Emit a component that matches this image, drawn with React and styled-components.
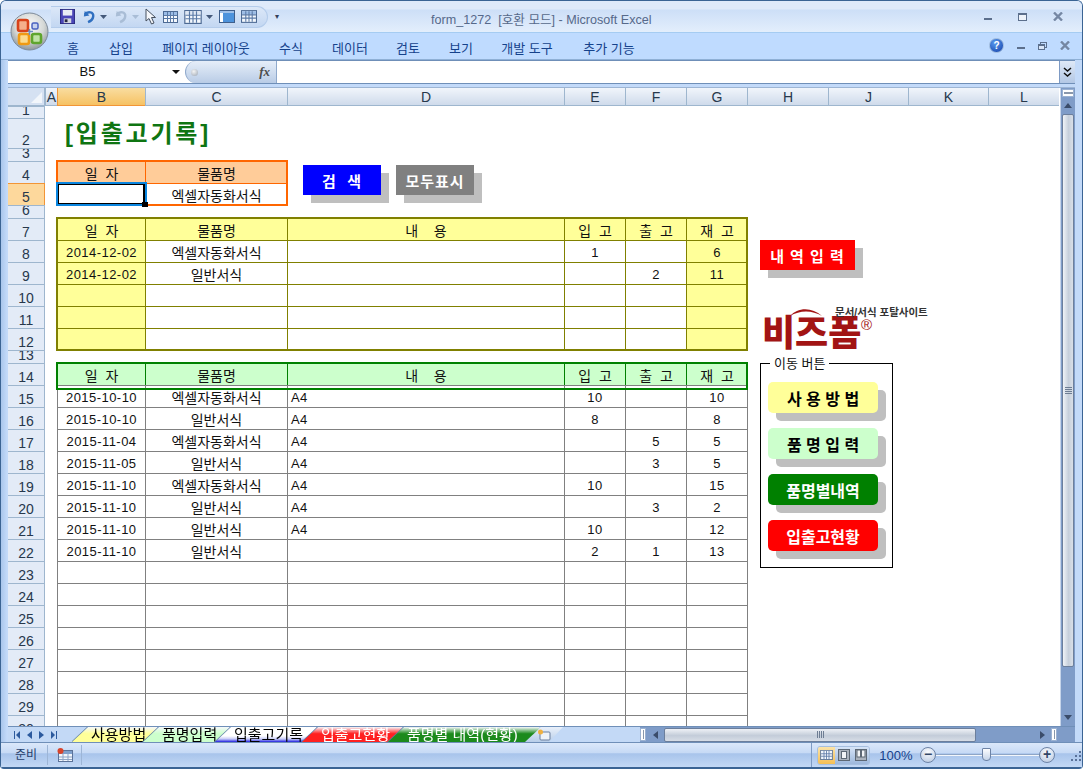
import styled, { createGlobalStyle } from "styled-components";

const GlobalStyle = createGlobalStyle`
  html, body { margin: 0; padding: 0; background: #fff; }
  body { font-family: "Liberation Sans", "Noto Sans CJK KR", sans-serif; }
  * { box-sizing: border-box; }
`;

// 시트 크기 (행 번호 폭 포함)
const COLUMNS = [
  ["A", 12], ["B", 88], ["C", 142], ["D", 277], ["E", 61], ["F", 61],
  ["G", 61], ["H", 81], ["J", 80], ["K", 80], ["L", 71],
];
const ROW_HEIGHTS = { 1: 12, 2: 30, 3: 13, 6: 13, 13: 13 };
const ROWS = Array.from({ length: 30 }, (_, i) => i + 1);

const yellowRows = [
  ["2014-12-02", "엑셀자동화서식", "", "1", "", "6"],
  ["2014-12-02", "일반서식", "", "", "2", "11"],
  ["", "", "", "", "", ""],
  ["", "", "", "", "", ""],
  ["", "", "", "", "", ""],
];

const greenRows = [
  ["2015-10-10", "엑셀자동화서식", "A4", "10", "", "10"],
  ["2015-10-10", "일반서식", "A4", "8", "", "8"],
  ["2015-11-04", "엑셀자동화서식", "A4", "", "5", "5"],
  ["2015-11-05", "일반서식", "A4", "", "3", "5"],
  ["2015-11-10", "엑셀자동화서식", "A4", "10", "", "15"],
  ["2015-11-10", "일반서식", "A4", "", "3", "2"],
  ["2015-11-10", "일반서식", "A4", "10", "", "12"],
  ["2015-11-10", "일반서식", "", "2", "1", "13"],
  ...Array.from({ length: 8 }, () => ["", "", "", "", "", ""]),
];

const tableHead = ["일  자", "물품명", "내    용", "입  고", "출  고", "재  고"];

const sheetTabs = [
  { name: "사용방법", width: 85, color: "#ffff99", text: "#000" },
  { name: "품명입력", width: 86, color: "#ccffcc", text: "#000" },
  { name: "입출고기록", width: 101, color: "#fff", text: "#000", active: true },
  { name: "입출고현황", width: 100, color: "#ff2020", text: "#fff" },
  { name: "품명별 내역(현황)", width: 151, color: "#1c8a1c", text: "#fff" },
];

const moveButtons = [
  { label: "사 용 방 법", bg: "#ffff99", fg: "#000" },
  { label: "품 명 입 력", bg: "#ccffcc", fg: "#000" },
  { label: "품명별내역", bg: "#008000", fg: "#fff" },
  { label: "입출고현황", bg: "#ff0000", fg: "#fff" },
];

const Window = styled.div`
  position: relative;
  width: 1083px;
  height: 769px;
  display: flex;
  flex-direction: column;
  overflow: hidden;
  border-radius: 6px 6px 4px 4px;
  border: 1px solid #3b6494;
  border-bottom: 0;
  background: #bfdbff;
`;

const TitleBar = styled.div`
  height: 32px;
  flex: none;
  display: flex;
  align-items: center;
  position: relative;
  padding: 0 0 0 50px;
  background: linear-gradient(#dfeafa 0, #dfeafa 8px, #cddff7 9px, #e3eefc 31px);
  border-bottom: 1px solid #a5ccf2;
`;

const QuickBar = styled.div`
  width: 217px;
  height: 22px;
  display: flex;
  align-items: center;
  gap: 6px;
  padding-left: 9px;
  border-radius: 0 12px 12px 0;
  background: linear-gradient(#dce8f8, #c3d7f2);
  border: 1px solid #b4cceb;
  border-left: 0;
`;

const QuickCaret = styled.span`
  margin-left: 7px;
  font-size: 8px;
  color: #33405a;
`;

const WindowTitle = styled.div`
  position: absolute;
  left: 430px;
  top: 8px;
  font-size: 12.6px;
  color: #56698a;
  white-space: pre;
`;

const WindowButtons = styled.div`
  position: absolute;
  right: 19px;
  top: 11px;
  display: flex;
  gap: 26px;
  align-items: center;
`;

const Orb = styled.svg`
  position: absolute;
  left: 9px;
  top: 11px;
  width: 39px;
  height: 39px;
  z-index: 3;
`;

const RibbonBar = styled.div`
  height: 27px;
  flex: none;
  position: relative;
  background: #bfdbff;
  border-bottom: 1px solid #8fb0d6;
`;

const RibbonTab = styled.span`
  position: absolute;
  left: ${(p) => p.$x}px;
  top: 5px;
  transform: translateX(-50%);
  font-size: 13px;
  color: #15428b;
  white-space: nowrap;
`;

const RibbonTools = styled.div`
  position: absolute;
  right: 12px;
  top: 5px;
  display: flex;
  align-items: center;
  gap: 13px;
`;

const HelpDot = styled.span`
  width: 15px;
  height: 15px;
  border-radius: 50%;
  background: radial-gradient(circle at 40% 30%, #5a9bf0, #123fa8);
  border: 1px solid #9db9dc;
  color: #fff;
  font: bold 10px "Liberation Sans", sans-serif;
  display: flex;
  align-items: center;
  justify-content: center;
`;

const Body = styled.div`
  flex: 1;
  min-height: 0;
  display: flex;
  flex-direction: column;
  padding: 0 7px;
  background: linear-gradient(90deg, #a9c6ec 0, #c3daf9 6px, #c3daf9 100%);
`;

const FormulaBar = styled.div`
  height: 24px;
  flex: none;
  display: flex;
  margin-bottom: 3px;
  border-top: 1px solid #6f8fb8;
  border-bottom: 1px solid #6f8fb8;
  background: #fff;
`;

const NameBox = styled.div`
  width: 177px;
  flex: none;
  position: relative;
  text-align: center;
  padding: 3px 18px 0 0;
  font-size: 13px;
  color: #111;
`;

const NameCaret = styled.span`
  position: absolute;
  right: 5px;
  top: 9px;
  border-left: 4px solid transparent;
  border-right: 4px solid transparent;
  border-top: 4px solid #111;
`;

const FxBox = styled.div`
  width: 92px;
  flex: none;
  display: flex;
  align-items: center;
  justify-content: space-between;
  padding: 0 6px 0 5px;
  border-radius: 11px 0 0 11px;
  border: 1px solid #8fa9cc;
  border-width: 0 1px 0 1px;
  background: linear-gradient(#e6eef9, #b9cce6);
`;

const FxDot = styled.span`
  width: 7px;
  height: 7px;
  border-radius: 50%;
  background: radial-gradient(circle at 40% 35%, #f4f4f4, #9aa5b3);
`;

const FxText = styled.span`
  font: italic bold 13px "Liberation Serif", serif;
  color: #4c4c4c;
`;

const FormulaInput = styled.div`
  flex: 1;
`;

const ExpandButton = styled.div`
  width: 16px;
  flex: none;
  display: flex;
  align-items: center;
  justify-content: center;
  border-left: 1px solid #7d9ac4;
  background: linear-gradient(#dfe9f7, #b3c8e5);
`;

const SheetArea = styled.div`
  flex: 1;
  min-height: 0;
  display: flex;
  background: #fff;
  border-top: 1px solid #9db5d4;
`;

const Grid = styled.div`
  position: relative;
  width: 1052px;
  flex: none;
  overflow: hidden;
  display: grid;
  grid-template-columns: 37px ${COLUMNS.map((c) => `${c[1]}px`).join(" ")};
  grid-template-rows: 18px ${ROWS.map((r) => `${ROW_HEIGHTS[r] || 22}px`).join(" ")};
  align-content: start;
`;

const Corner = styled.div`
  grid-column: 1;
  grid-row: 1;
  background: #d5e1f2;
  border-right: 1px solid #9eb6ce;
  border-bottom: 1px solid #9eb6ce;
  display: flex;
  align-items: flex-end;
  justify-content: flex-end;
  padding: 0 2px 2px 0;
`;

const CornerMark = styled.span`
  border-left: 11px solid transparent;
  border-bottom: 11px solid #f2f6fb;
`;

const ColumnHead = styled.div`
  grid-row: 1;
  grid-column: ${(p) => p.$col};
  display: flex;
  align-items: center;
  justify-content: center;
  font-size: 14px;
  color: #27384c;
  overflow: hidden;
  background: ${(p) => (p.$active ? "linear-gradient(#f9dda0, #f6c264)" : "linear-gradient(#f1f5fb, #cfdbeb)")};
  border-left: 1px solid ${(p) => (p.$active ? "#f29536" : "#9eb6ce")};
  border-bottom: 1px solid ${(p) => (p.$active ? "#f29536" : "#9eb6ce")};
`;

const RowHead = styled.div`
  grid-column: 1;
  grid-row: ${(p) => p.$row};
  display: flex;
  align-items: flex-end;
  justify-content: center;
  padding-bottom: 2px;
  font-size: 14px;
  line-height: 12px;
  color: #27384c;
  overflow: hidden;
  background: ${(p) => (p.$active ? "#fdd89c" : "#e3ebf7")};
  border-top: 1px solid ${(p) => (p.$active ? "#f29536" : "#9eb6ce")};
  border-right: 1px solid ${(p) => (p.$active ? "#f29536" : "#9eb6ce")};
`;

const SheetTitle = styled.div`
  grid-column: 3 / 6;
  grid-row: 3;
  display: flex;
  align-items: flex-end;
  padding-left: 8px;
  font-size: 24px;
  line-height: 29px;
  letter-spacing: 2.8px;
  font-weight: 700;
  color: #0f7512;
  white-space: nowrap;
`;

const Table = styled.div`
  position: relative;
  grid-column: ${(p) => p.$cols};
  grid-row: ${(p) => p.$rows};
  display: grid;
  grid-template-columns: subgrid;
  grid-template-rows: subgrid;
  &::after {
    content: "";
    position: absolute;
    inset: -1px;
    border: 2px solid ${(p) => p.$frame};
    pointer-events: none;
    z-index: 1;
  }
`;

// 초록 표는 제목 행만 굵은 테두리, 본문은 회색 선
const LogTable = styled(Table)`
  &::after {
    bottom: auto;
    height: 24px;
  }
  & > :nth-child(6n) {
    box-shadow: 1px 0 0 #808080;
  }
`;

const Cell = styled.div`
  display: flex;
  align-items: center;
  justify-content: ${(p) => (p.$left ? "flex-start" : "center")};
  padding: ${(p) => (p.$num ? "1px" : "0")} 0 0 ${(p) => (p.$left ? "3px" : "0")};
  font-size: ${(p) => (p.$num ? "13px" : "14px")};
  color: #111;
  white-space: pre;
  letter-spacing: ${(p) => (p.$num ? "0.45px" : "0")};
  background: ${(p) => p.$fill || "#fff"};
  border-top: 1px solid ${(p) => p.$line};
  border-left: 1px solid ${(p) => p.$line};
`;

const ActiveCell = styled.div`
  position: absolute;
  left: 48px;
  top: 94px;
  width: 91px;
  height: 24px;
  border: 2px solid #0a86e0;
  z-index: 2;
  &::before {
    content: "";
    position: absolute;
    inset: 0;
    border: 1px solid #000;
    border-right-width: 2px;
  }
  &::after {
    content: "";
    position: absolute;
    right: -3px;
    bottom: -3px;
    width: 6px;
    height: 5px;
    background: #000;
  }
`;

const ShapeButton = styled.div`
  position: absolute;
  left: ${(p) => p.$x}px;
  top: ${(p) => p.$y}px;
  width: ${(p) => p.$w}px;
  height: 30px;
  display: flex;
  align-items: center;
  justify-content: center;
  background: ${(p) => p.$bg};
  box-shadow: 8px 8px 0 #bfbfbf;
  color: #fff;
  font-size: 15px;
  letter-spacing: 1px;
  font-weight: 700;
  white-space: pre;
  z-index: 2;
`;

const Logo = styled.div`
  position: absolute;
  left: 755px;
  top: 218px;
  width: 166px;
  height: 44px;
  z-index: 2;
`;

const LogoMark = styled.span`
  position: absolute;
  left: -1px;
  top: 6px;
  font-size: 36px;
  line-height: 44px;
  font-weight: 900;
  color: #a21414;
  white-space: nowrap;
`;

const LogoArc = styled.svg`
  position: absolute;
  left: 25px;
  top: 0;
`;

const LogoTag = styled.span`
  position: absolute;
  left: 72px;
  top: 0;
  font-size: 10.5px;
  line-height: 13px;
  font-weight: 700;
  color: #333;
  white-space: nowrap;
`;

const LogoReg = styled.span`
  position: absolute;
  left: 98px;
  top: 12px;
  font-size: 15px;
  line-height: 14px;
  color: #a21414;
`;

const MoveGroup = styled.div`
  position: absolute;
  left: 752px;
  top: 275px;
  width: 133px;
  height: 205px;
  display: flex;
  flex-direction: column;
  gap: 15px;
  padding: 18px 0 0 7px;
  background: #fff;
  border: 1px solid #000;
  z-index: 2;
`;

const GroupLegend = styled.span`
  position: absolute;
  left: 9px;
  top: -7px;
  padding: 0 4px;
  background: #fff;
  font-size: 13px;
  line-height: 14px;
  color: #111;
  white-space: nowrap;
`;

const MoveButton = styled.div`
  width: 110px;
  height: 31px;
  flex: none;
  display: flex;
  align-items: center;
  justify-content: center;
  border-radius: 5px;
  font-size: 16px;
  font-weight: 700;
  background: ${(p) => p.$bg};
  color: ${(p) => p.$fg};
  box-shadow: 8px 8px 0 #bfbfbf;
`;

const VScroll = styled.div`
  flex: 1;
  position: relative;
  display: flex;
  flex-direction: column;
  align-items: stretch;
  background: #7f9cc8;
  border-left: 1px solid #c7d5ea;
  margin-right: 0;
`;

const SplitBox = styled.div`
  height: 8px;
  flex: none;
  margin: 1px 1px 0;
  background: #fff;
  border: 1px solid #9bb2d2;
  display: flex;
  align-items: center;
  justify-content: center;
  &::before {
    content: "";
    width: 9px;
    height: 2px;
    background: #8a98ac;
  }
`;

const ArrowBox = styled.div`
  height: 17px;
  flex: none;
  display: flex;
  align-items: center;
  justify-content: center;
`;

const ArrowUp = styled.span`
  border-left: 4px solid transparent;
  border-right: 4px solid transparent;
  border-bottom: 5px solid #3a4c6a;
`;

const ArrowDown = styled.span`
  border-left: 4px solid transparent;
  border-right: 4px solid transparent;
  border-top: 5px solid #3a4c6a;
`;

const VThumb = styled.div`
  height: 553px;
  flex: none;
  margin: 0 1px;
  border: 1px solid #6c7f9c;
  border-radius: 2px;
  background: linear-gradient(90deg, #f0f3f7, #c6cfdb 55%, #d9dfe8);
  display: flex;
  align-items: center;
  justify-content: center;
`;

const ThumbGrip = styled.span`
  width: 7px;
  height: 7px;
  background: repeating-linear-gradient(#6e7d93 0 1px, transparent 1px 2px);
`;

const VTrack = styled.div`
  flex: 1;
`;

const BottomRow = styled.div`
  height: 16px;
  flex: none;
  display: flex;
  align-items: stretch;
  background: #c3d9f6;
  border-top: 1px solid #6f8fb8;
`;

const TabNav = styled.div`
  width: 64px;
  flex: none;
  display: flex;
  align-items: center;
  gap: 7px;
  padding-left: 6px;
`;

const TabStrip = styled.div`
  width: 568px;
  flex: none;
  display: flex;
  overflow: hidden;
`;

const TabShell = styled.div`
  width: ${(p) => p.$w}px;
  margin-right: -14px;
  flex: none;
  filter: drop-shadow(-1px 0 0 #5e7ea8);
`;

const TabFace = styled.div`
  height: 100%;
  display: flex;
  align-items: center;
  padding-left: 19px;
  font-size: 15px;
  line-height: 15px;
  white-space: nowrap;
  color: ${(p) => p.$text};
  clip-path: polygon(0 100%, 16px 0, 100% 0, 100% 100%);
  background: ${(p) =>
    p.$active
      ? "linear-gradient(#fff 0, #fff 60%, #c8ccf8 80%, #1e1ee0 100%)"
      : `linear-gradient(#f6f8fc, ${p.$color} 45%, ${p.$color} 100%)`};
`;

const NewTab = styled.div`
  width: 38px;
  flex: none;
  display: flex;
  align-items: center;
  justify-content: center;
  clip-path: polygon(0 100%, 16px 0, 100% 0, 100% 0, calc(100% - 14px) 100%);
  background: linear-gradient(#e9f0fa, #b8cee9);
`;

const HScroll = styled.div`
  flex: 1;
  display: flex;
  align-items: center;
  background: #7f9cc8;
`;

const SplitHandle = styled.div`
  width: 6px;
  height: 13px;
  flex: none;
  background: #fff;
  border: 1px solid #9bb2d2;
  display: flex;
  justify-content: center;
  &::before {
    content: "";
    width: 1px;
    height: 9px;
    margin-top: 1px;
    background: #8a98ac;
  }
`;

const HThumb = styled.div`
  width: 312px;
  height: 14px;
  flex: none;
  margin-left: 6px;
  border: 1px solid #6c7f9c;
  border-radius: 2px;
  background: linear-gradient(#eef1f6, #c3ccd9 55%, #d7dde6);
  display: flex;
  align-items: center;
  justify-content: center;
`;

const HGrip = styled.span`
  width: 7px;
  height: 7px;
  background: repeating-linear-gradient(90deg, #6e7d93 0 1px, transparent 1px 2px);
`;

const ArrowLeft = styled.span`
  margin-left: 7px;
  border-top: 4px solid transparent;
  border-bottom: 4px solid transparent;
  border-right: 5px solid #3a4c6a;
`;

const ArrowRight = styled.span`
  margin-left: 64px;
  margin-right: 6px;
  border-top: 4px solid transparent;
  border-bottom: 4px solid transparent;
  border-left: 5px solid #3a4c6a;
`;

const StatusBar = styled.div`
  height: 27px;
  flex: none;
  margin: 0 -7px;
  display: flex;
  align-items: center;
  position: relative;
  background: linear-gradient(#dbe8fa, #c7daf5 40%, #a8c4eb 45%, #c3d8f5);
  border-top: 1px solid #6f8fb8;
  border-bottom: 2px solid #3b6494;
`;

const StatusText = styled.div`
  width: 47px;
  flex: none;
  padding-left: 14px;
  font-size: 12px;
  color: #27406c;
  border-right: 1px solid #9db5d6;
  line-height: 20px;
`;

const StatusIcon = styled.div`
  width: 34px;
  flex: none;
  height: 20px;
  display: flex;
  align-items: center;
  justify-content: center;
  border-right: 1px solid #9db5d6;
`;

const StatusRight = styled.div`
  margin-left: auto;
  width: 271px;
  height: 100%;
  display: flex;
  align-items: center;
  padding-left: 5px;
  border-left: 1px solid #7e9bc4;
`;

const ViewGroup = styled.div`
  width: 56px;
  height: 19px;
  display: flex;
  border-radius: 3px;
  border: 1px solid #a6bfdf;
  overflow: hidden;
`;

const ViewButton = styled.div`
  flex: 1;
  display: flex;
  align-items: center;
  justify-content: center;
  background: ${(p) => (p.$active ? "linear-gradient(#fbe3a8, #f5bf55)" : "linear-gradient(#d6e4f7, #9db8dc)")};
`;

const ZoomText = styled.span`
  margin-left: 9px;
  width: 43px;
  font-size: 13px;
  color: #15428b;
`;

const ZoomRound = styled.span`
  width: 16px;
  height: 16px;
  flex: none;
  border-radius: 50%;
  border: 1px solid #6d83a6;
  background: radial-gradient(circle at 50% 30%, #fbfcfe, #b5c6df);
  color: #334766;
  font: bold 14px/13px "Liberation Sans", sans-serif;
  text-align: center;
`;

const ZoomTrack = styled.div`
  width: 103px;
  height: 2px;
  flex: none;
  position: relative;
  background: linear-gradient(#8fa6c6 50%, #f3f7fc 50%);
`;

const ZoomThumb = styled.span`
  position: absolute;
  left: 46px;
  top: -6px;
  width: 9px;
  height: 13px;
  border: 1px solid #6d83a6;
  border-radius: 1px 1px 4px 4px;
  background: linear-gradient(#fbfcfe, #c5d4e8);
`;

const Grip = styled.svg`
  margin-left: 16px;
  flex: none;
`;

const FloppyIcon = () => (
  <svg width="15" height="15" viewBox="0 0 16 16">
    <rect x="0.5" y="0.5" width="15" height="15" fill="#4a46b8" stroke="#2a2a80" />
    <rect x="3" y="1" width="10" height="6" fill="#e8ecf5" />
    <rect x="4" y="10" width="8" height="5" fill="#d5d8e0" />
    <rect x="5" y="11" width="3" height="3" fill="#23233f" />
  </svg>
);

const UndoIcon = ({ color }) => (
  <svg width="15" height="15" viewBox="0 0 16 16" fill="none">
    <path d="M4 2 L3 8 L9 7" fill={color} />
    <path d="M4 6 C7 2 14 3 13 8 C12.6 11 10 13 7.500 14" stroke={color} strokeWidth="2.600" />
  </svg>
);

const SmallCaret = ({ color = "#44597a" }) => (
  <svg width="7" height="4" viewBox="0 0 7 4" style={{ marginLeft: -2 }}>
    <path d="M0 0h7L3.500 4z" fill={color} />
  </svg>
);

const CursorIcon = () => (
  <svg width="12" height="17" viewBox="0 0 12 17">
    <path d="M1 1 L1 13 L4 10.500 L6.500 16 L9 15 L6.500 9.500 L10.500 9.500 Z" fill="#f4f6fa" stroke="#46505f" />
  </svg>
);

const GridIcon = ({ w = 15, h = 12, head = "#9bbce6" }) => (
  <svg width={w} height={h} viewBox="0 0 15 12">
    <rect x="0.5" y="0.5" width="14" height="11" fill="#f4f8fd" stroke="#4d6a94" />
    <rect x="1" y="1" width="13" height="3" fill={head} />
    <path d="M1 4.500h13M1 7.500h13M4.500 1v10M7.500 1v10M10.500 1v10" stroke="#5b7aa6" strokeWidth="1" />
  </svg>
);

const PaneIcon = () => (
  <svg width="16" height="13" viewBox="0 0 16 13">
    <rect x="0.5" y="0.5" width="15" height="12" fill="#fff" stroke="#3f5f8c" />
    <rect x="4" y="3" width="11" height="9" fill="#4d93dc" />
    <rect x="1" y="1" width="14" height="2" fill="#9fc0e8" />
  </svg>
);

const MinIcon = ({ w = 8 }) => (
  <svg width={w} height="8" viewBox={`0 0 ${w} 8`}>
    <rect x="0" y="5" width={w} height="2" fill="#5c6f8c" />
  </svg>
);

const MaxIcon = () => (
  <svg width="9" height="8" viewBox="0 0 9 8">
    <rect x="0.5" y="0.5" width="8" height="7" fill="#eef3fa" stroke="#5c6f8c" />
    <rect x="0" y="0" width="9" height="2" fill="#5c6f8c" />
  </svg>
);

const RestoreIcon = () => (
  <svg width="9" height="8" viewBox="0 0 9 8">
    <rect x="2.500" y="0.500" width="6" height="5" fill="none" stroke="#5c6f8c" />
    <rect x="0.500" y="2.500" width="6" height="5" fill="#d9e6f8" stroke="#5c6f8c" />
    <rect x="0" y="2" width="7" height="2" fill="#5c6f8c" />
  </svg>
);

const CloseIcon = () => (
  <svg width="10" height="9" viewBox="0 0 10 9">
    <path d="M1 0.500 L9 8.500 M9 0.500 L1 8.500" stroke="#7587a3" strokeWidth="2.400" />
  </svg>
);

const NavArrows = () => (
  <>
    <svg width="6" height="8" viewBox="0 0 6 8"><path d="M0 0h1v8H0zM6 0v8L2 4z" fill="#2c5a9e" /></svg>
    <svg width="5" height="8" viewBox="0 0 5 8"><path d="M5 0v8L0 4z" fill="#2c5a9e" /></svg>
    <svg width="5" height="8" viewBox="0 0 5 8"><path d="M0 0v8l5-4z" fill="#2c5a9e" /></svg>
    <svg width="6" height="8" viewBox="0 0 6 8"><path d="M5 0h1v8H5zM0 0v8l4-4z" fill="#2c5a9e" /></svg>
  </>
);

const renderRows = (rows, line, leftFill) =>
  rows.flatMap((row, r) =>
    row.map((value, c) => (
      <Cell
        key={`${r}-${c}`}
        $line={line}
        $left={c === 2}
        $num={c !== 1}
        $fill={leftFill && (c === 0 || c === 5) ? leftFill : undefined}
      >
        {value}
      </Cell>
    ))
  );

const App = () => {
  return (
    <Window>
      <GlobalStyle />
      <Orb viewBox="0 0 39 39">
        <defs>
          <radialGradient id="orbFill" cx="50%" cy="35%" r="65%">
            <stop offset="0" stopColor="#fdfdfd" />
            <stop offset="0.6" stopColor="#d5d8d6" />
            <stop offset="1" stopColor="#8f979c" />
          </radialGradient>
        </defs>
        <circle cx="19.500" cy="19.500" r="18.500" fill="url(#orbFill)" stroke="#7d8a99" />
        <rect x="8" y="8" width="10" height="11" rx="2" fill="#f4b08c" stroke="#d8431a" strokeWidth="2.600" />
        <rect x="22" y="11" width="6" height="6" rx="1.500" fill="#c7d2ee" stroke="#4a62c0" strokeWidth="1.500" />
        <rect x="9" y="22" width="10" height="10" rx="2" fill="#fbdc90" stroke="#f09a13" strokeWidth="2.600" />
        <rect x="22" y="22" width="9" height="9" rx="2" fill="#bfe3a6" stroke="#5fa52e" strokeWidth="2.600" />
        <path d="M18 19.500h5M19.500 17v6" stroke="#6d8fc0" strokeWidth="1.500" />
      </Orb>

      <TitleBar>
        <QuickBar>
          <FloppyIcon />
          <UndoIcon color="#2f6fc0" />
          <SmallCaret />
          <UndoIcon color="#a9bdd6" />
          <SmallCaret color="#a9bdd6" />
          <CursorIcon />
          <GridIcon />
          <GridIcon w={18} h={14} head="#dfe8f4" />
          <SmallCaret />
          <PaneIcon />
          <GridIcon w={16} h={13} />
        </QuickBar>
        <QuickCaret>▾</QuickCaret>
        <WindowTitle>form_1272  [호환 모드] - Microsoft Excel</WindowTitle>
        <WindowButtons>
          <MinIcon />
          <MaxIcon />
          <CloseIcon />
        </WindowButtons>
      </TitleBar>

      <RibbonBar>
        <RibbonTab $x={72}>홈</RibbonTab>
        <RibbonTab $x={120}>삽입</RibbonTab>
        <RibbonTab $x={205}>페이지 레이아웃</RibbonTab>
        <RibbonTab $x={290}>수식</RibbonTab>
        <RibbonTab $x={349}>데이터</RibbonTab>
        <RibbonTab $x={407}>검토</RibbonTab>
        <RibbonTab $x={460}>보기</RibbonTab>
        <RibbonTab $x={526}>개발 도구</RibbonTab>
        <RibbonTab $x={608}>추가 기능</RibbonTab>
        <RibbonTools>
          <HelpDot>?</HelpDot>
          <MinIcon />
          <RestoreIcon />
          <CloseIcon />
        </RibbonTools>
      </RibbonBar>

      <Body>
        <FormulaBar>
          <NameBox>
            B5
            <NameCaret />
          </NameBox>
          <FxBox>
            <FxDot />
            <FxText>fx</FxText>
          </FxBox>
          <FormulaInput />
          <ExpandButton>
            <svg width="9" height="11" viewBox="0 0 9 11" fill="none" stroke="#111" strokeWidth="1.500">
              <path d="M1 1l3.500 3L8 1M1 6l3.500 3L8 6" />
            </svg>
          </ExpandButton>
        </FormulaBar>

        <SheetArea>
          <Grid>
            <Corner>
              <CornerMark />
            </Corner>
            {COLUMNS.map(([name], i) => (
              <ColumnHead key={name} $col={i + 2} $active={name === "B"}>
                {name}
              </ColumnHead>
            ))}
            {ROWS.map((r) => (
              <RowHead key={r} $row={r + 1} $active={r === 5}>
                {r}
              </RowHead>
            ))}

            <SheetTitle>[입출고기록]</SheetTitle>

            <Table $cols="3 / 5" $rows="5 / 7" $frame="#ff6600">
              <Cell $line="#ff6600" $fill="#ffcc99">{tableHead[0]}</Cell>
              <Cell $line="#ff6600" $fill="#ffcc99">{tableHead[1]}</Cell>
              <Cell $line="#ff6600" />
              <Cell $line="#ff6600">엑셀자동화서식</Cell>
            </Table>

            <Table $cols="3 / 9" $rows="8 / 14" $frame="#808000">
              {tableHead.map((h) => (
                <Cell key={h} $line="#808000" $fill="#ffff99">{h}</Cell>
              ))}
              {renderRows(yellowRows, "#808000", "#ffff99")}
            </Table>

            <LogTable $cols="3 / 9" $rows="15 / 32" $frame="#008000">
              {tableHead.map((h) => (
                <Cell key={h} $line="#008000" $fill="#ccffcc">{h}</Cell>
              ))}
              {renderRows(greenRows, "#808080")}
            </LogTable>

            <ActiveCell />

            <ShapeButton $x={295} $y={77} $w={78} $bg="#0000ff">검  색</ShapeButton>
            <ShapeButton $x={388} $y={77} $w={78} $bg="#808080">모두표시</ShapeButton>
            <ShapeButton $x={752} $y={152} $w={95} $bg="#ff0000">내 역 입 력</ShapeButton>

            <Logo>
              <LogoArc width="40" height="12" viewBox="0 0 40 12">
                <path d="M2 10 C10 1 24 1 34 10 C24 4 12 4 2 10 Z" fill="#a21414" />
              </LogoArc>
              <LogoMark>비즈폼</LogoMark>
              <LogoTag>문서/서식 포탈사이트</LogoTag>
              <LogoReg>®</LogoReg>
            </Logo>

            <MoveGroup>
              <GroupLegend>이동 버튼</GroupLegend>
              {moveButtons.map((b) => (
                <MoveButton key={b.label} $bg={b.bg} $fg={b.fg}>
                  {b.label}
                </MoveButton>
              ))}
            </MoveGroup>
          </Grid>

          <VScroll>
            <SplitBox />
            <ArrowBox>
              <ArrowUp />
            </ArrowBox>
            <VThumb>
              <ThumbGrip />
            </VThumb>
            <VTrack />
            <ArrowBox>
              <ArrowDown />
            </ArrowBox>
          </VScroll>
        </SheetArea>

        <BottomRow>
          <TabNav>
            <NavArrows />
          </TabNav>
          <TabStrip>
            {sheetTabs.map((t) => (
              <TabShell key={t.name} $w={t.width}>
                <TabFace $color={t.color} $text={t.text} $active={t.active}>
                  {t.name}
                </TabFace>
              </TabShell>
            ))}
            <NewTab>
              <svg width="14" height="12" viewBox="0 0 14 12">
                <rect x="3" y="3" width="10" height="8" rx="1" fill="#eef2f8" stroke="#6a7f9e" />
                <circle cx="3.500" cy="3" r="2.500" fill="#f0b040" />
              </svg>
            </NewTab>
          </TabStrip>
          <HScroll>
            <SplitHandle />
            <ArrowLeft />
            <HThumb>
              <HGrip />
            </HThumb>
            <ArrowRight />
            <SplitHandle />
          </HScroll>
        </BottomRow>

        <StatusBar>
          <StatusText>준비</StatusText>
          <StatusIcon>
            <svg width="16" height="14" viewBox="0 0 16 14">
              <rect x="1.500" y="2.500" width="14" height="11" fill="#f2f6fc" stroke="#5b7298" />
              <rect x="2" y="3" width="13" height="3" fill="#7fa0cc" />
              <path d="M2 9h13M2 11.500h13M6 6v7M11 6v7" stroke="#8ea5c6" />
              <circle cx="3.500" cy="3" r="3" fill="#d8442c" />
            </svg>
          </StatusIcon>
          <StatusRight>
            <ViewGroup>
              <ViewButton $active>
                <GridIcon w={13} h={10} head="#f4f8fd" />
              </ViewButton>
              <ViewButton>
                <svg width="12" height="12" viewBox="0 0 12 12">
                  <rect x="0.500" y="0.500" width="11" height="11" fill="#aab2bd" stroke="#5d6875" />
                  <rect x="3.500" y="2.500" width="5" height="7" fill="#f2f4f7" stroke="#5d6875" />
                </svg>
              </ViewButton>
              <ViewButton>
                <svg width="12" height="12" viewBox="0 0 12 12">
                  <rect x="0.500" y="0.500" width="11" height="11" fill="#aab2bd" stroke="#5d6875" />
                  <rect x="2" y="1" width="3.500" height="7" fill="#f2f4f7" stroke="#5d6875" />
                  <rect x="6.500" y="1" width="3.500" height="7" fill="#f2f4f7" stroke="#5d6875" />
                </svg>
              </ViewButton>
            </ViewGroup>
            <ZoomText>100%</ZoomText>
            <ZoomRound>−</ZoomRound>
            <ZoomTrack>
              <ZoomThumb />
            </ZoomTrack>
            <ZoomRound>+</ZoomRound>
            <Grip width="11" height="11" viewBox="0 0 11 11">
              <path d="M8 1h2v2H8zM4 5h2v2H4zM8 5h2v2H8zM0 9h2v2H0zM4 9h2v2H4zM8 9h2v2H8z" fill="#5a7299" />
            </Grip>
          </StatusRight>
        </StatusBar>
      </Body>
    </Window>
  );
};

export default App;
